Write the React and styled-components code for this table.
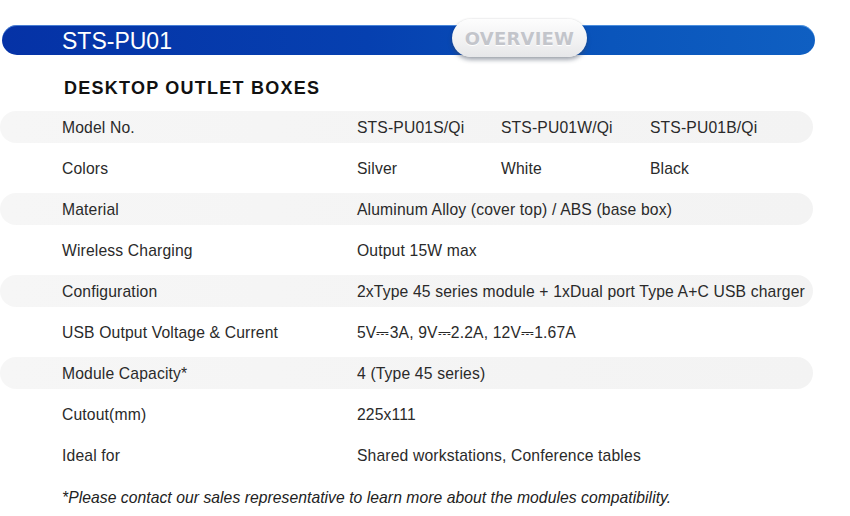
import React from "react";
import styled, { createGlobalStyle } from "styled-components";

const Global = createGlobalStyle`
  html, body { margin: 0; padding: 0; background: #fff; }
  body { font-family: "Liberation Sans", Arial, sans-serif; color: #222; }
`;

const Page = styled.div`
  width: 850px;
  height: 516px;
  overflow: hidden;
  padding-top: 25px;
  box-sizing: border-box;
`;

const Banner = styled.div`
  position: relative;
  margin-left: 2px;
  width: 813px;
  height: 30px;
  border-radius: 15px;
  background: linear-gradient(90deg, #0532a6 0%, #0640b0 45%, #0a55bb 75%, #0f5fc2 100%);
  box-shadow: inset 0 1px 0 rgba(140, 200, 255, 0.5);
  display: flex;
  align-items: center;
  padding-left: 60px;
  box-sizing: border-box;
`;

const BannerTitle = styled.span`
  color: #fff;
  font-size: 23px;
  line-height: 1;
  margin-top: 2px;
`;

const Pill = styled.div`
  position: absolute;
  left: 450px;
  top: -6px;
  width: 135px;
  height: 38px;
  border-radius: 19px;
  background: linear-gradient(180deg, #fdfdfd 0%, #f1f1f2 60%, #e6e7e9 100%);
  box-shadow: 0 3px 4px rgba(60, 70, 90, 0.45), 0 0 2px rgba(0, 0, 0, 0.15);
  display: flex;
  align-items: center;
  justify-content: center;
  font-family: "DejaVu Sans", Verdana, sans-serif;
  font-weight: bold;
  font-size: 18px;
  color: #c3c5cb;
  letter-spacing: 0.2px;
  text-shadow: 0 1px 0 #fff;
`;

const Heading = styled.h1`
  margin: 0;
  padding: 22px 0 0 64px;
  height: 34px;
  box-sizing: content-box;
  font-size: 18px;
  line-height: 22px;
  font-weight: bold;
  letter-spacing: 1.25px;
  color: #111;
`;

const Table = styled.div`
  display: flex;
  flex-direction: column;
  gap: 9px;
`;

const Row = styled.div`
  display: grid;
  grid-template-columns: 295px 144px 149px 1fr;
  align-items: center;
  width: 813px;
  height: 32px;
  padding-left: 62px;
  padding-top: 1px;
  box-sizing: border-box;
  border-radius: 16px;
  background: ${(p) => (p.$band ? "linear-gradient(90deg, #f6f6f6 0%, #f3f3f3 100%)" : "transparent")};
  font-size: 15.7px;
  letter-spacing: 0.15px;
  color: #2a2a2a;
  white-space: nowrap;
`;

const Cell = styled.span`
  grid-column: ${(p) => p.$span || "auto"};
`;

const Note = styled.p`
  margin: 0;
  padding: 18px 0 0 62px;
  font-size: 15.7px;
  font-style: italic;
  letter-spacing: 0.05px;
  color: #222;
`;

const rows = [
  { label: "Model No.", values: ["STS-PU01S/Qi", "STS-PU01W/Qi", "STS-PU01B/Qi"], band: true },
  { label: "Colors", values: ["Silver", "White", "Black"] },
  { label: "Material", values: ["Aluminum Alloy (cover top) / ABS (base box)"], band: true },
  { label: "Wireless Charging", values: ["Output 15W max"] },
  { label: "Configuration", values: ["2xType 45 series module + 1xDual port Type A+C USB charger"], band: true },
  { label: "USB Output Voltage & Current", values: ["5V\u23933A, 9V\u23932.2A, 12V\u23931.67A"] },
  { label: "Module Capacity*", values: ["4 (Type 45 series)"], band: true },
  { label: "Cutout(mm)", values: ["225x111"] },
  { label: "Ideal for", values: ["Shared workstations, Conference tables"] },
];

export default function App() {
  return (
    <>
      <Global />
      <Page>
        <Banner>
          <BannerTitle>STS-PU01</BannerTitle>
          <Pill>OVERVIEW</Pill>
        </Banner>
        <Heading>DESKTOP OUTLET BOXES</Heading>
        <Table>
          {rows.map((r) => (
            <Row key={r.label} $band={r.band}>
              <Cell>{r.label}</Cell>
              {r.values.length === 1 ? (
                <Cell $span="2 / 5">{r.values[0]}</Cell>
              ) : (
                r.values.map((v) => <Cell key={v}>{v}</Cell>)
              )}
            </Row>
          ))}
        </Table>
        <Note>*Please contact our sales representative to learn more about the modules compatibility.</Note>
      </Page>
    </>
  );
}
